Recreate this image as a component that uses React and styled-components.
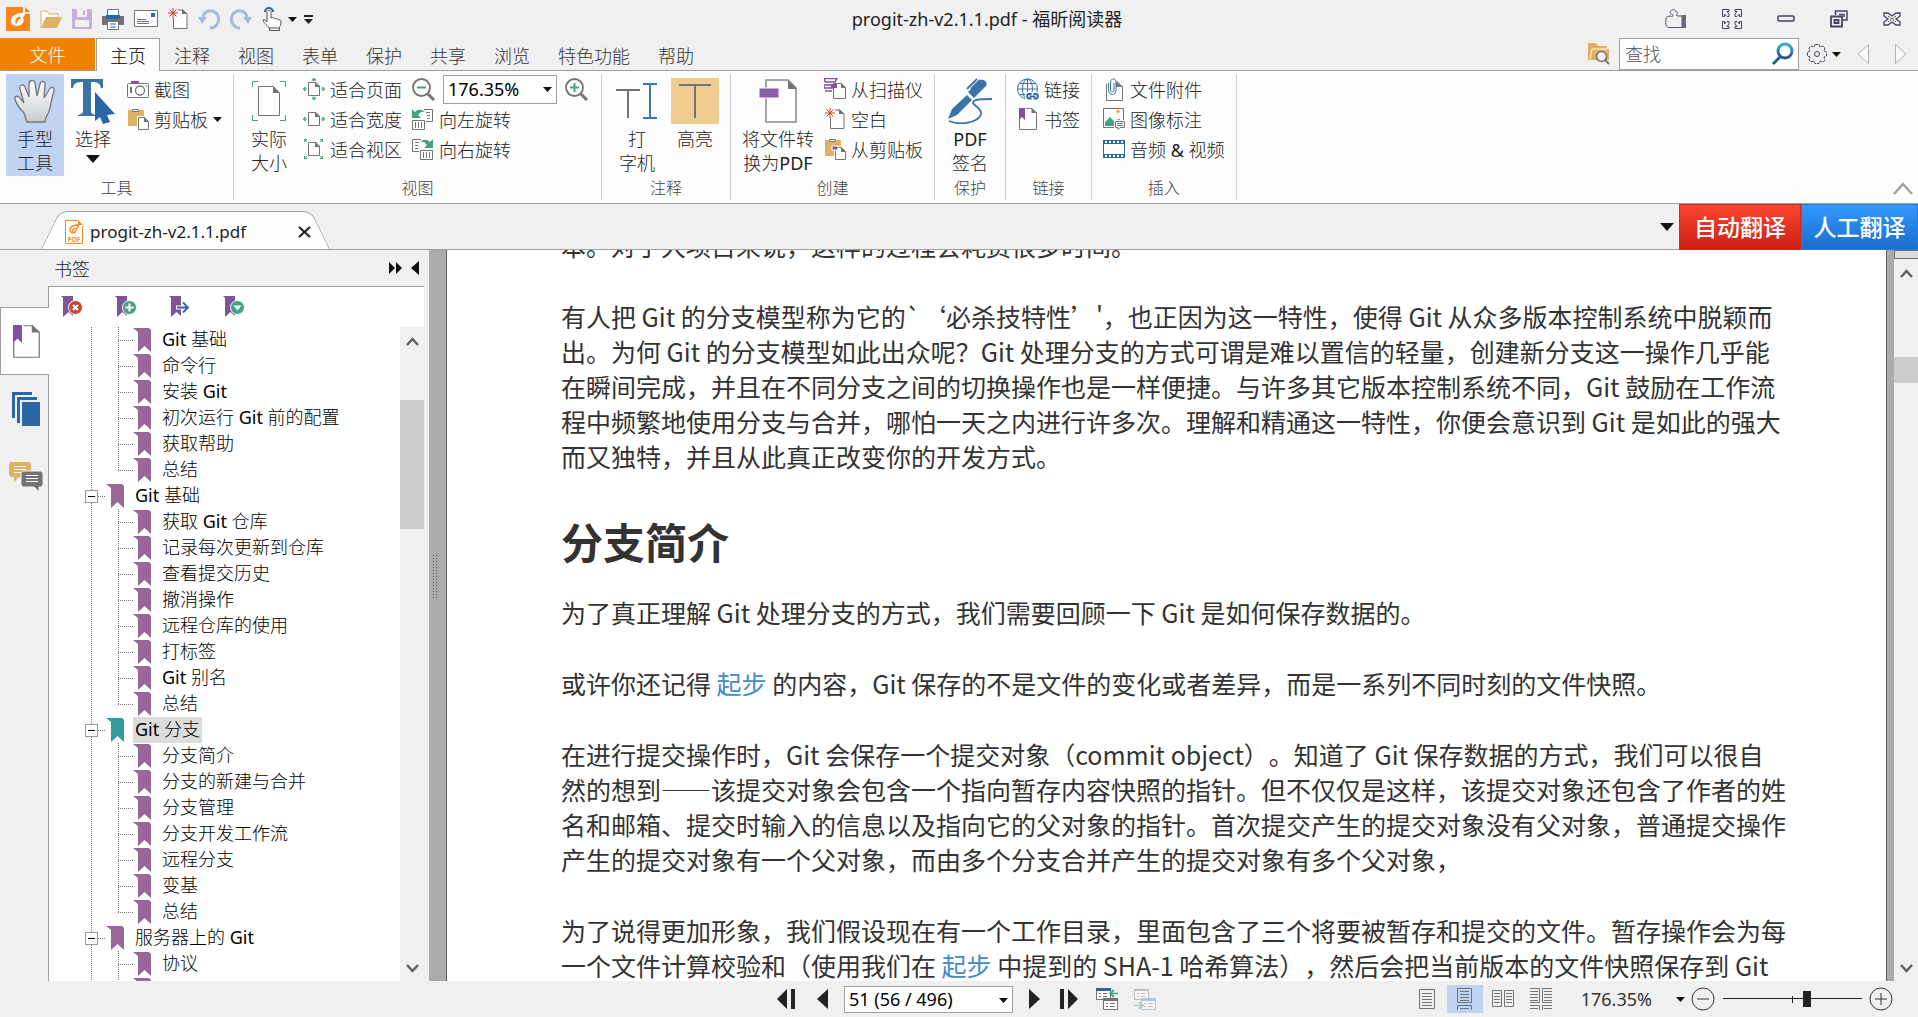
import React from "react"
import styled, { createGlobalStyle, css } from "styled-components"

const GlobalStyle = createGlobalStyle`
  * {
    box-sizing: border-box;
  }
  body {
    margin: 0;
    overflow: hidden;
    background: #f0f0f0;
    color: #222;
    font-family: "Noto Sans", "Noto Sans CJK SC", sans-serif;
    font-size: 18px;
  }
  button, select, input {
    margin: 0;
    padding: 0;
    border: 0;
    border-radius: 0;
    background: none;
    color: inherit;
    font: inherit;
  }
  svg {
    display: block;
    flex: none;
  }
`

const Window = styled.div`
  display: flex;
  flex-direction: column;
  height: 100vh;
`

/* title bar */

const TitleBar = styled.header`
  display: flex;
  align-items: center;
  height: 38px;
  padding: 0 17px 0 6px;
`
const QuickTools = styled.div`
  display: flex;
  align-items: center;
  gap: 10px;
`
const MenuCarets = styled.div`
  display: flex;
  align-items: center;
  gap: 7px;
  margin-left: -4px;
`
const IconButton = styled.button`
  display: flex;
  align-items: center;
  justify-content: center;
`
const Title = styled.h1`
  flex: 1;
  margin: 0;
  padding-right: 4px;
  text-align: center;
  font-size: 18px;
  line-height: 24px;
  font-weight: 400;
`
const WindowButtons = styled.div`
  display: flex;
  align-items: center;
  gap: 35px;
`

/* ribbon tabs */

const TabRow = styled.nav`
  display: flex;
  height: 33px;
  padding-right: 11px;
  border-bottom: 1px solid #a0a0a0;
`
const FileTab = styled.button`
  width: 95px;
  margin-right: 1px;
  background: #f08200;
  color: #fff;
  font-weight: 300;
`
const Tab = styled.button`
  height: 33px;
  padding: 0 13px;
  border: 1px solid transparent;
  border-bottom: 0;
  color: #333;
  font-weight: 300;
  ${props => props.$active && css`
    background: #fdfdfd;
    border-color: #a0a0a0;
    color: #000;
  `}
`
const SearchArea = styled.div`
  display: flex;
  align-items: center;
  margin-left: auto;
`
const SearchBox = styled.label`
  display: flex;
  align-items: center;
  width: 180px;
  height: 32px;
  margin: 0 8px 0 9px;
  padding: 0 4px 0 5px;
  border: 1px solid #a0a0a0;
  background: #fff;
`
const SearchInput = styled.input`
  flex: 1;
  min-width: 0;
  outline: 0;
  font-weight: 300;
  &::placeholder {
    color: #555;
    opacity: 1;
  }
`
const SearchNav = styled.div`
  display: flex;
  gap: 26px;
  margin-left: 16px;
`

/* ribbon */

const Ribbon = styled.section`
  display: flex;
  height: 133px;
  padding-top: 3px;
  border-bottom: 1px solid #a0a0a0;
  background: #fdfdfd;
`
const Group = styled.div`
  display: flex;
  flex-direction: column;
  margin-bottom: 3px;
  padding: 0 6px;
  border-right: 1px solid #d0d0d0;
`
const GroupBody = styled.div`
  display: flex;
  flex: none;
  height: 102px;
`
const GroupLabel = styled.div`
  line-height: 24px;
  text-align: center;
  font-size: 16px;
  font-weight: 300;
  color: #444;
`
const BigButton = styled.button`
  display: flex;
  flex-direction: column;
  align-items: center;
  width: ${props => (props.$wide ? "82px" : "58px")};
  padding-top: 4px;
  line-height: 24px;
  font-weight: 300;
  white-space: nowrap;
  background: ${props => (props.$active ? "#c1d3f2" : "none")};
`
const BigIcon = styled.span`
  display: flex;
  align-items: center;
  justify-content: center;
  width: 48px;
  height: 46px;
  margin-bottom: 3px;
  background: ${props => (props.$lit ? "#f0cb92" : "none")};
`
const DropArrow = styled.span`
  display: flex;
  align-items: center;
  height: 16px;
`
const Latin = styled.span`
  font-weight: 400;
`
const Column = styled.div`
  display: flex;
  flex-direction: column;
  padding: 0 5px;
`
const SmallButton = styled.button`
  display: flex;
  align-items: center;
  gap: 5px;
  height: 30px;
  font-weight: 300;
  white-space: nowrap;
`
const ZoomRow = styled.div`
  display: flex;
  align-items: center;
  gap: 8px;
  height: 30px;
  padding-right: 2px;
`
const SelectWrap = styled.label`
  position: relative;
  display: flex;
  width: ${props => props.$width};
  height: ${props => props.$height};
  border: 1px solid #a0a0a0;
  background: #fff;
  color: #000;
  svg {
    position: absolute;
    right: 4px;
    top: 11px;
    pointer-events: none;
  }
`
const Select = styled.select`
  flex: 1;
  padding: 0 4px;
  appearance: none;
  outline: 0;
`
const Collapse = styled.button`
  align-self: flex-end;
  margin: 0 5px 8px auto;
`

/* document tabs */

const DocTabs = styled.div`
  display: flex;
  align-items: flex-end;
  height: 46px;
  padding-left: 41px;
  border-bottom: 1px solid #a0a0a0;
`
const DocTab = styled.div`
  position: relative;
  isolation: isolate;
  display: flex;
  align-items: center;
  width: 289px;
  height: 38px;
  padding: 3px 19px 0 24px;
  font-size: 17px;
  &::before,
  &::after {
    content: "";
    position: absolute;
    z-index: -1;
    top: 0;
    bottom: 0;
    background: #fdfdfd;
    border-top: 1px solid #a0a0a0;
  }
  &::before {
    left: 0;
    right: 40%;
    border-left: 1px solid #a0a0a0;
    border-top-left-radius: 8px;
    transform: skewX(-26deg);
    transform-origin: bottom left;
  }
  &::after {
    left: 40%;
    right: 0;
    border-right: 1px solid #a0a0a0;
    border-top-right-radius: 8px;
    transform: skewX(26deg);
    transform-origin: bottom right;
  }
`
const DocName = styled.span`
  flex: 1;
  margin-left: 7px;
`
const TabActions = styled.div`
  display: flex;
  align-self: stretch;
  margin: 0 0 -1px auto;
`
const Translate = styled.button`
  width: ${props => (props.$blue ? "117px" : "122px")};
  height: 46px;
  margin-left: ${props => (props.$blue ? "0" : "5px")};
  padding-bottom: 2px;
  background: ${props =>
    props.$blue
      ? "linear-gradient(#3398ff, #1a6dcc)"
      : "linear-gradient(#fb4630, #cc1f14)"};
  border: 1px solid ${props => (props.$blue ? "#1f7ce0" : "#d8251a")};
  color: #fff;
  font-size: 23px;
  font-weight: 500;
`

/* side panel */

const Main = styled.main`
  display: flex;
  flex: 1;
  min-height: 0;
`
const Strip = styled.div`
  display: flex;
  flex-direction: column;
  width: 48px;
  padding-top: 57px;
`
const StripButton = styled.button`
  position: relative;
  z-index: 1;
  display: flex;
  align-items: center;
  justify-content: center;
  width: 49px;
  height: 68px;
  padding-left: 2px;
  border: 1px solid transparent;
  border-right: 0;
  ${props => props.$active && css`
    background: #fff;
    border-color: #a0a0a0;
  `}
`
const Panel = styled.aside`
  display: flex;
  flex-direction: column;
  width: 376px;
`
const PanelHeader = styled.div`
  display: flex;
  align-items: center;
  gap: 9px;
  height: 36px;
  padding: 0 5px 0 6px;
  h2 {
    flex: 1;
    margin: 0;
    font-size: 18px;
    font-weight: 300;
  }
`
const PanelBody = styled.div`
  display: flex;
  flex-direction: column;
  flex: 1;
  min-height: 0;
  border: 1px solid #a0a0a0;
  border-width: 1px 0 0 1px;
  background: #fff;
`
const BookmarkTools = styled.div`
  display: flex;
  gap: 32px;
  height: 40px;
  padding: 7px 12px;
`
const TreeArea = styled.div`
  display: flex;
  flex: 1;
  min-height: 0;
`
const Tree = styled.ul`
  flex: 1;
  min-width: 0;
  margin: 0;
  padding: 0 0 0 36px;
  overflow: hidden;
  list-style: none;
`
const TreeRow = styled.li`
  display: flex;
  align-items: center;
  height: 26px;
`
const dots = "repeating-linear-gradient(to bottom, #777 0 1px, transparent 1px 2px)"
const rowDots = "repeating-linear-gradient(to right, #777 0 1px, transparent 1px 2px)"

const Guide = styled.span`
  display: flex;
  align-items: center;
  width: 13px;
  height: 26px;
  background: ${dots} 6px 0 / 1px 100% no-repeat;
`
const Branch = styled.span`
  width: 15px;
  height: 26px;
  margin-left: 20px;
  background:
    ${dots} 0 0 / 1px ${props => (props.$last ? "50%" : "100%")} no-repeat,
    ${rowDots} 0 13px / 100% 1px no-repeat;
`
const Stub = styled.span`
  width: 8px;
  height: 1px;
  background: ${rowDots};
`
const Toggle = styled.button`
  display: flex;
  align-items: center;
  justify-content: center;
  width: 13px;
  height: 13px;
  border: 1px solid #999;
  background: #fff;
  &::before {
    content: "";
    width: 7px;
    height: 1px;
    background: #000;
  }
`
const TreeLink = styled.a`
  height: 26px;
  margin-left: 7px;
  padding: 0 2px;
  line-height: 25px;
  color: #000;
  font-weight: 300;
  text-decoration: none;
  white-space: nowrap;
  background: ${props => (props.$selected ? "#dcdcdc" : "none")};
`
const ScrollBar = styled.div`
  display: flex;
  flex-direction: column;
  align-items: center;
  width: 24px;
  padding-bottom: 8px;
  background: #f0f0f0;
`
const SplitBox = styled.div`
  width: 24px;
  height: 9px;
  border: 1px solid #707070;
  border-right: 0;
  background: #dcdcdc;
`
const ScrollThumb = styled.div`
  width: 24px;
  height: ${props => props.$height};
  margin: ${props => props.$top} 0 auto;
  background: #cdcdcd;
`
const ScrollButton = styled.button`
  margin-top: ${props => props.$top || "0"};
`
const Splitter = styled.div`
  display: flex;
  align-items: center;
  width: 22px;
  padding-left: 4px;
  border-left: 5px solid #f0f0f0;
  background: #ababab;
`
const Grip = styled.span`
  width: 4px;
  height: 43px;
  margin-bottom: 78px;
  background: conic-gradient(from 270deg at 1px 1px, #606060 90deg, transparent 0) 0 0 / 3px 3px;
`

/* page */

const Viewport = styled.div`
  display: flex;
  flex: 1;
  min-width: 0;
  padding-right: 7px;
  background: #ababab;
  overflow: hidden;
`
const Page = styled.article`
  flex: 1;
  padding: 0 0 0 114px;
  border: 1px solid #606060;
  border-width: 0 1px;
  background: #fff;
  color: #333;
  font-family: "Noto Sans CJK SC", sans-serif;
  font-size: 25px;
  line-height: 35px;
  text-spacing-trim: space-all;
  white-space: nowrap;
  overflow: hidden;
  p {
    margin: 0 0 36px;
  }
  p:first-child {
    margin-top: -22px;
  }
  h2 {
    margin: 0 0 24px;
    font-size: 42px;
    line-height: 61px;
    font-weight: 700;
  }
  a {
    color: #428bca;
    text-decoration: none;
  }
`

/* status bar */

const StatusBar = styled.footer`
  display: grid;
  grid-template-columns: 1fr auto 1fr;
  align-items: center;
  height: 36px;
  padding: 0 25px 0 40px;
`
const Pager = styled.div`
  grid-column: 2;
  display: flex;
  align-items: center;
  gap: 16px;
`
const ViewTools = styled.div`
  display: flex;
  align-items: center;
  justify-content: flex-end;
`
const ViewButton = styled.button`
  display: flex;
  align-items: center;
  justify-content: center;
  width: 36px;
  height: 28px;
  margin-right: 2px;
  background: ${props => (props.$active ? "#c1d3f2" : "none")};
`
const ZoomText = styled.button`
  display: flex;
  align-items: center;
  gap: 24px;
  margin: 0 6px 0 20px;
  color: #333;
`
const ZoomSlider = styled.input`
  width: 139px;
  height: 22px;
  margin: 0 7px 0 8px;
  appearance: none;
  background:
    linear-gradient(#222, #222) 0 10px / 100% 1px no-repeat,
    linear-gradient(#222, #222) 50% 50% / 1px 7px no-repeat;
  &::-webkit-slider-thumb {
    appearance: none;
    width: 8px;
    height: 16px;
    background: #222;
  }
`

/* icons */

const Icon = ({ w = 22, h = 22, children }) => (
  <svg width={w} height={h} viewBox={`0 0 ${w} ${h}`} fill="none" aria-hidden="true">
    {children}
  </svg>
)

const gray = "#737373"
const green = "#46a17e"
const blue = "#2b67a4"
const purple = "#7d539b"
const sand = "#e1b062"

const Caret = ({ w = 9, h = 5 }) => (
  <Icon w={w} h={h}><path d={`M0 0H${w}L${w / 2} ${h}Z`} fill="#111" /></Icon>
)

const FoxitIcon = () => (
  <Icon w={24} h={24}>
    <path d="M0 0H17V7H24V24H0Z" fill="#f6861f" />
    <path d="M19 0L24 5H19Z" fill="#f6861f" />
    <path d="M19 6C15 5.500 12 6 9 8C5 10 4 14 6 17C8 19.500 13 19.500 16 17C18 15 18 12 17 10C18.500 9 19 8 19 6Z" fill="#fff" />
    <path d="M14 9.500C10 10 8 14 10 17C12 16 10.500 12.500 15 11.500Z" fill="#f6861f" />
  </Icon>
)
const FolderIcon = () => (
  <Icon w={22} h={20}>
    <path d="M1 19V2H7L9 5H18V9" stroke={sand} fill="#fff" />
    <path d="M1 19L6 8H22L17 19Z" fill={sand} />
  </Icon>
)
const SaveIcon = () => (
  <Icon w={20} h={20}>
    <path d="M0 0H20V20H0Z" fill="#c6b2d6" />
    <path d="M5 0H15V8H5ZM3 11H17V18H3Z" fill="#f0f0f0" />
    <path d="M11 1H13V6H11Z" fill="#c6b2d6" />
  </Icon>
)
const PrintIcon = () => (
  <Icon w={22} h={22}>
    <path d="M5.500 1.500H16.500V8H5.500Z" stroke={gray} fill="#fff" />
    <path d="M0 8H22V17H0Z" fill={gray} />
    <path d="M4 7H18V11H4Z" fill={blue} />
    <path d="M5.500 13.500H16.500V21.500H5.500Z" stroke={gray} fill="#fff" />
    <path d="M8 16H14M8 19H14" stroke={blue} />
  </Icon>
)
const MailIcon = () => (
  <Icon w={24} h={18}>
    <path d="M.5.5H23.500V16.500H.5Z" stroke={gray} fill="#fff" />
    <path d="M17 3H21V7H17Z" fill={blue} />
    <path d="M3 9.500H12M3 11.500H15M3 13.500H15" stroke={gray} />
  </Icon>
)
const NewIcon = () => (
  <Icon w={20} h={22}>
    <path d="M5.500 10V20.500H19V6L15 2H10" stroke={gray} fill="#fff" />
    <path d="M14 1V6H19.500Z" fill={gray} />
    <path d="M5 0V10M0 5H10M1.500 1.500L8.500 8.500M8.500 1.500L1.500 8.500" stroke="#c5452f" />
  </Icon>
)
const UndoIcon = ({ flip }) => (
  <Icon w={22} h={22}>
    <g transform={flip ? "matrix(-1 0 0 1 22 0)" : undefined}>
      <path d="M5 9C6 3 14 0 19 6C23 12 19 20 12 20" stroke="#a5bdd4" strokeWidth="3" />
      <path d="M0 9H9L4 16Z" fill="#a5bdd4" />
    </g>
  </Icon>
)
const TouchIcon = () => (
  <Icon w={20} h={24}>
    <path d="M3 5A4 4 0 0 1 11 5" stroke={blue} strokeWidth="2" />
    <path d="M5 15V5C5 3 9 3 9 5V11C11 10 12 11 13 12C15 11 16 12 16 13C18 12 19 13 19 15C19 18 18 19 17 21H7C5 17 1 16 1 13C2 12 4 13 5 15Z" fill="#fff" stroke="#555" />
    <path d="M7.500 21V23.500H17.500V21" stroke="#555" />
  </Icon>
)
const MenuCaretIcon = () => (
  <Icon w={9} h={9}>
    <path d="M0 1H9" stroke="#222" strokeWidth="2" />
    <path d="M0 4H9L4.500 9Z" fill="#222" />
  </Icon>
)

const SkinIcon = () => (
  <Icon w={22} h={20}>
    <path d="M3 18.500H17V7H13L11 6C13 5 13 3 11 3C10 0 7 0 6 2C4 4 6 5 8 6C8 8 7 8 6 7C3 7 0 8 1 11C0 14 1 17 3 18.500Z" stroke="#55556a" />
    <path d="M17 6H21V19H17Z" fill="#666680" />
  </Icon>
)
const FullIcon = () => (
  <Icon w={20} h={20}>
    {[[0, 0, 1, 1], [20, 0, -1, 1], [0, 20, 1, -1], [20, 20, -1, -1]].map(([x, y, a, b]) => (
      <g key={`${x}-${y}`} transform={`matrix(${a} 0 0 ${b} ${x} ${y})`}>
        <path d="M.5 7.500V.5H7V2.500H5L7 5V7.500H5L2.500 5V7.500Z" stroke="#44445c" />
      </g>
    ))}
  </Icon>
)
const MinimizeIcon = () => (
  <Icon w={18} h={8}><rect x="1" y="1" width="16" height="5" rx="1" stroke="#44445c" strokeWidth="1.500" /></Icon>
)
const RestoreIcon = () => (
  <Icon w={18} h={18}>
    <path d="M5.500 5V1H17V10H13" stroke="#44445c" strokeWidth="1.500" />
    <path d="M9 4.500H14V7" stroke="#44445c" strokeWidth="1.500" />
    <path d="M1 6.500H12V16.500H1ZM4.500 10H8.500V13H4.500Z" stroke="#44445c" strokeWidth="1.800" />
  </Icon>
)
const CloseIcon = () => (
  <Icon w={18} h={14}>
    <path d="M1 1H5L9 4L13 1H17V4L13 7L17 10V13H13L9 10L5 13H1V10L5 7L1 4Z" stroke="#44445c" strokeWidth="1.300" />
    <path d="M5 4L13 10M13 4L5 10" stroke="#44445c" strokeDasharray="2 1" />
  </Icon>
)
const FolderSearchIcon = () => (
  <Icon w={22} h={22}>
    <path d="M0 0H8L10 3H19V6H21V17H0Z" fill={sand} />
    <path d="M2 16L4 6H19" stroke="#fff" />
    <circle cx="13.500" cy="13.500" r="5" fill="#f0f0f0" stroke={gray} strokeWidth="1.600" />
    <path d="M17 17L21 21" stroke={gray} strokeWidth="2" />
  </Icon>
)
const SearchIcon = () => (
  <Icon w={22} h={24}>
    <defs>
      <linearGradient id="lens" x1="0" y1="0" x2="0" y2="1">
        <stop offset="0" stopColor="#3fb0d2" />
        <stop offset="1" stopColor="#2c4e90" />
      </linearGradient>
    </defs>
    <circle cx="13" cy="9" r="7" stroke="url(#lens)" strokeWidth="3" />
    <path d="M8 15L1 22" stroke="#2f5796" strokeWidth="3" />
  </Icon>
)
const GearIcon = () => (
  <Icon w={20} h={20}>
    <path d="M8 .5H12L13 3L16 2L18 4L17 7L19.500 8V12L17 13L18 16L16 18L13 17L12 19.500H8L7 17L4 18L2 16L3 13L.5 12V8L3 7L2 4L4 2L7 3Z" stroke="#44445c" strokeDasharray="3 1" />
    <circle cx="10" cy="10" r="2.500" stroke="#44445c" />
  </Icon>
)
const TriIcon = ({ right }) => (
  <Icon w={12} h={20}><path d={right ? "M.5.5V19.500L11 10Z" : "M11.500.5V19.500L1 10Z"} stroke="#b0b0b8" fill="#fafafa" /></Icon>
)

const HandIcon = () => (
  <Icon w={42} h={44}>
    <defs>
      <linearGradient id="palm" x1="0" y1="0" x2="0" y2="1">
        <stop offset="0" stopColor="#fff" />
        <stop offset="1" stopColor="#c9cdd2" />
      </linearGradient>
    </defs>
    <path d="M13 43L10 34C6 30 2 24 1 20C0 17 4 16 6 19L10 24L6 10C5 6 9 4 11 8L15 18L15 5C15 1 20 0 21 4L23 17L26 5C27 1 32 2 31 6L30 19L35 11C37 7 41 8 40 12C38 18 37 24 36 29C35 35 31 38 31 43Z" fill="url(#palm)" stroke="#777" strokeWidth="1.300" />
  </Icon>
)
const SelectTextIcon = () => (
  <Icon w={46} h={46}>
    <path d="M1 1H33V10H31C30 5 28 4 21 4V33C21 36 23 36 26 37V38H8V37C11 36 13 36 13 33V4C6 4 4 5 3 10H1Z" fill="#3a72aa" />
    <path d="M25 14L45 36L37 37L40 44L33 46L30 39L25 43Z" fill="#2a66a3" />
  </Icon>
)
const CameraIcon = () => (
  <Icon w={22} h={18}>
    <path d="M4 1H12V4H4Z" fill={purple} />
    <rect x=".5" y="3.500" width="21" height="14" rx="1" stroke={gray} fill="#fff" />
    <circle cx="13" cy="10.500" r="4.500" stroke={gray} strokeWidth="1.300" />
    <path d="M4 7V13" stroke={gray} strokeWidth="2" />
    <path d="M18 6H20" stroke={gray} />
  </Icon>
)
const ClipboardIcon = ({ mark }) => (
  <Icon w={22} h={22}>
    <path d="M1 2H17V18H1Z" fill={sand} />
    <path d="M5.500 3.500V1.500H11.500V3.500Z" fill="#fff" stroke={gray} />
    <path d="M10 8H22V22H10Z" fill="#fdfdfd" />
    <path d="M11.500 9.500H17.500L21.500 13.500V21.500H11.500Z" fill="#fff" stroke={gray} />
    <path d="M17 9V14H22Z" fill={gray} />
    {mark && <path d="M8 8H14V12H8Z" fill={purple} stroke="#fff" />}
  </Icon>
)
const ActualIcon = () => (
  <Icon w={34} h={40}>
    <path d="M.5 6V.5H6M28 .5H33.500V6M33.500 34V39.500H28M6 39.500H.5V34" stroke={green} />
    <path d="M6.500 5.500H21L27.500 12V34.500H6.500Z" stroke={gray} fill="#fff" />
    <path d="M21 5V12H28Z" fill={gray} />
  </Icon>
)
const FitIcon = ({ mode }) => (
  <Icon w={22} h={22}>
    <path d="M5.500 4.500H13L16.500 8V17.500H5.500Z" stroke={gray} fill="#fff" />
    <path d="M12 4V9H17Z" fill={gray} />
    {mode !== "area" && <path d="M4 11H0M2.500 9L.5 11L2.500 13M18 11H22M19.500 9L21.500 11L19.500 13" stroke={green} strokeWidth="1.200" />}
    {mode === "page" && <path d="M11 3.500V0M9 2.500L11 .5L13 2.500M11 18.500V22M9 19.500L11 21.500L13 19.500" stroke={green} strokeWidth="1.200" />}
    {mode === "area" && <path d="M1.500 4V1.500H4M1.500 1.500L4 4M17 1.500H19.500V4M19.500 1.500L17 4M19.500 18V20.500H17M19.500 20.500L17 18M4 20.500H1.500V18M1.500 20.500L4 18" stroke={green} />}
  </Icon>
)
const ZoomIcon = ({ plus }) => (
  <Icon w={23} h={23}>
    <circle cx="9.500" cy="9.500" r="8.500" stroke={gray} strokeWidth="1.800" />
    <path d="M16 16L22 22" stroke={gray} strokeWidth="3" />
    <path d={plus ? "M5 9.500H14M9.500 5V14" : "M5 9.500H14"} stroke={green} strokeWidth="2" />
  </Icon>
)
const RotateIcon = ({ flip }) => (
  <Icon w={22} h={22}>
    <g transform={flip ? "matrix(-1 0 0 1 21 0)" : undefined}>
      <path d="M12 1.500H20.500V13.500H14M14 4.500H18M15 7.500H18M15 10.500H18" stroke={gray} />
      <path d="M0 10V1L3 4C6 1 10 1 13 4C10 3 8 4 6 7L9 10Z" fill={green} />
      <path d="M.5 12.500H12.500V21.500H.5ZM3.500 14V20M6.500 14V20M9.500 14V20" stroke={gray} fill="#fff" />
    </g>
  </Icon>
)
const TypewriterIcon = () => (
  <Icon w={42} h={38}>
    <path d="M0 8H24M12 8V36" stroke={gray} strokeWidth="2" />
    <path d="M27 2H41M27 36H41M34 2V36" stroke="#3a78b4" strokeWidth="2" />
  </Icon>
)
const HighlightIcon = () => (
  <Icon w={32} h={34}><path d="M0 1H32M16 1V34" stroke={gray} strokeWidth="2" /></Icon>
)
const ConvertIcon = () => (
  <Icon w={38} h={44}>
    <path d="M7 1H29L37 9V43H7Z" fill="#fff" stroke="#888" strokeWidth="1.500" />
    <path d="M29 1V10H38Z" fill={gray} />
    <path d="M0 9H20V19H0Z" fill="#8a5ea8" stroke="#fff" />
  </Icon>
)
const ScannerIcon = () => (
  <Icon w={22} h={22}>
    <path d="M.5 3V.5H13L11 4H2ZM0 7H14V10H0ZM1 13H8" stroke={purple} strokeWidth="1.500" />
    <path d="M9.500 5.500H17.500L21.500 9.500V20.500H9.500Z" fill="#fff" stroke={gray} />
    <path d="M17 5V10H22Z" fill={gray} />
    <path d="M7 6H13V10H7Z" fill={purple} />
  </Icon>
)
const SignIcon = () => (
  <Icon w={46} h={46}>
    <path d="M20 11L30 1M24 11L33 2" stroke="#3a72aa" strokeWidth="1.800" />
    <path d="M33 2C37 1 41 4 39 8L27 20L21 14Z" fill="#3a72aa" />
    <path d="M20 17L25 22L10 37L1 41L5 31Z" fill="#3a72aa" />
    <path d="M45 21C36 21 25 21 26 25C28 29 35 30 34 36C32 44 15 48 2 43" stroke="#3a72aa" strokeWidth="1.800" />
  </Icon>
)
const GlobeIcon = () => (
  <Icon w={22} h={22}>
    <circle cx="10.500" cy="11" r="10" stroke="#3a72aa" />
    <ellipse cx="10.500" cy="11" rx="5" ry="10" stroke="#3a72aa" />
    <path d="M10.500 1V21M1 11H20M3 5.500H18M3 16.500H18" stroke="#3a72aa" />
    <path d="M8 14H22V22H8Z" fill="#fdfdfd" />
    <path d="M14.500 20.500H12C9.500 20.500 9.500 16 12 16H14.500M16.500 16H19C21.500 16 21.500 20.500 19 20.500H16.500M12.500 18.300H18.500" stroke={blue} strokeWidth="1.800" />
  </Icon>
)
const MarkPageIcon = ({ w = 18, h = 22 }) => (
  <svg width={w} height={h} viewBox="0 0 18 22" fill="none" aria-hidden="true">
    <path d="M.5 11V21.500H17.500V5L13 .5H7" stroke={gray} strokeWidth={h > 22 ? 0.8 : 1} fill="#fff" />
    <path d="M12.500 0V5H18Z" fill={gray} />
    <path d="M0 0H6V12L3 9L0 12Z" fill={purple} />
  </svg>
)
const AttachIcon = () => (
  <Icon w={22} h={23}>
    <path d="M3.500 6V22.500H19.500V9L14 3.500" stroke={gray} fill="#fff" />
    <path d="M13 3V9H20Z" fill={gray} />
    <path d="M5.500 5V12C5.500 18 13 18 13 12V4C13 0 7.500 0 7.500 4V12C7.500 15 11 15 11 12V5" stroke="#3a72aa" fill="#fdfdfd" />
  </Icon>
)
const ImageIcon = () => (
  <Icon w={22} h={22}>
    <path d="M.5.5H20.500V19.500H.5Z" stroke={gray} fill="#fff" />
    <path d="M2 18V14L7 9L12 14V12L17 11V18Z" fill={green} />
    <path d="M15 1.500V5.500M13 3.500H17" stroke={sand} strokeWidth="1.500" />
    <path d="M11 12H22V22H11Z" fill="#fff" />
    <path d="M12.500 13.500H21.500V19.500H17L15 21.500V19.500H12.500ZM14 15.500H20M14 17.500H20" stroke={gray} />
  </Icon>
)
const FilmIcon = () => (
  <Icon w={22} h={18}>
    <path d="M0 0H22V18H0Z" fill={blue} />
    <path d="M1 4H21V14H1Z" fill="#fff" />
    <path d="M2 2H21M2 16H21" stroke="#fff" strokeWidth="2" strokeDasharray="2 2" />
  </Icon>
)
const ChevronIcon = ({ w = 13, h = 9, down, color = "#606060" }) => (
  <Icon w={w} h={h}>
    <path d={down ? `M1 1L${w / 2} ${h - 2}L${w - 1} 1` : `M1 ${h - 1}L${w / 2} 2L${w - 1} ${h - 1}`} stroke={color} strokeWidth="2.500" />
  </Icon>
)

const PdfIcon = () => (
  <Icon w={18} h={24}>
    <path d="M13 .5H.5V23.500H17.500V6" stroke="#f6861f" fill="#fff" />
    <path d="M13 0L18 5H13Z" fill="#f6861f" />
    <path d="M13 5C8 5 5 7 5 10C5 14 12 14 11 9L13 7ZM10 8C8 9 7 11 8 12" stroke="#f6861f" strokeWidth="1.500" />
    <text x="9" y="21.500" fontSize="7" fontFamily="Noto Sans" fontWeight="600" textAnchor="middle" fill="#f6861f">PDF</text>
  </Icon>
)
const XIcon = () => (
  <Icon w={13} h={12}><path d="M1 1L12 11M12 1L1 11" stroke="#222" strokeWidth="2.200" /></Icon>
)
const PagesIcon = () => (
  <Icon w={28} h={34}>
    <path d="M0 0H20V3H3V26H0ZM5 5H25V8H8V31H5ZM10 10H28V34H10Z" fill={blue} />
  </Icon>
)
const CommentsIcon = () => (
  <Icon w={34} h={30}>
    <path d="M2 0H20L22 2V12L20 15H10L5 20V15H2L0 13V2Z" fill={sand} />
    <path d="M5 4.500H17M5 7.500H17M5 10.500H12" stroke="#fff" />
    <path d="M14 9H32L34 11V23L32 25H30V30L25 25H14L12 23V11Z" fill={gray} stroke="#f0f0f0" />
    <path d="M17 13.500H29M17 16.500H29M17 19.500H29" stroke="#fff" />
  </Icon>
)
const FlagIcon = ({ color = "#996699" }) => (
  <Icon w={20} h={24}>
    <path d="M0 0H16L18 2V24L11.500 18L5 24V4Z" fill={color} />
  </Icon>
)
const ToolFlagIcon = ({ kind }) => (
  <Icon w={22} h={22}>
    <path d="M0 0H12V20L7.500 16L2 21V2Z" fill={purple} />
    {kind !== "go" && <circle cx="14.500" cy="11.500" r="7" fill={kind === "delete" ? "#c54a33" : green} stroke="#fff" />}
    {kind === "delete" && <path d="M12 9L17 14M17 9L12 14" stroke="#fff" strokeWidth="2" />}
    {kind === "add" && <path d="M14.500 7.500V15.500M10.500 11.500H18.500" stroke="#fff" strokeWidth="2" />}
    {kind === "menu" && <path d="M10.500 9.500H18.500L14.500 14.500Z" fill="#fff" />}
    {kind === "go" && (
      <>
        <path d="M7 11.500H19M14 6.500L19 11.500L14 16.500" stroke="#fff" strokeWidth="4" />
        <path d="M8 11.500H19M14 6.500L19 11.500L14 16.500" stroke={blue} strokeWidth="1.800" />
      </>
    )}
  </Icon>
)

const JumpIcon = ({ dim }) => (
  <g opacity={dim ? 0.4 : 1}>
    <path d="M.5 1.500H14.500V11.500H.5Z" stroke={gray} fill="#fff" />
    <path d={dim ? "M0 1H15V3H0Z" : "M0 0H15V3H0Z"} fill={dim ? gray : blue} />
    <path d="M3 5.500H5M7 5.500H11M3 8.500H5M7 8.500H11" stroke={gray} />
    <path d="M7.500 10.500H21.500V21.500H7.500Z" stroke={dim ? "#4d8cd0" : gray} fill="#fff" />
    <path d="M7 10H22V13H7Z" fill={dim ? "#4d8cd0" : gray} />
    <path d="M10 15.500H12M14 15.500H19M10 18.500H12M14 18.500H19" stroke={gray} />
    <path d={dim ? "M0 17.500H9M5 14L9 17.500L5 21" : "M22 5.500H14M18 2L14 5.500L18 9"} stroke={green} strokeWidth="1.700" />
  </g>
)
const lines = (x1, x2, from, count) =>
  Array.from({ length: count }, (_, i) => `M${x1} ${from + i * 3}H${x2}`).join("")

const SinglePageIcon = () => (
  <Icon w={16} h={20}><path d={`M.5.5H15.500V19.500H.5Z${lines(3, 13, 4.5, 5)}`} stroke={gray} /></Icon>
)
const ContinuousIcon = () => (
  <Icon w={16} h={22}><path d={`M.5.5H14.500V14.500H.5ZM.5 22V17.500H14.500V22${lines(3, 12, 3.5, 4)}M3 20.500H12`} stroke={gray} /></Icon>
)
const FacingIcon = () => (
  <Icon w={22} h={18}><path d={`M.5.5H9.500V16.500H.5ZM12.500.5H21.500V16.500H12.500Z${lines(2, 8, 3.5, 4)}${lines(14, 20, 3.5, 4)}`} stroke={gray} /></Icon>
)
const FacingContinuousIcon = () => (
  <Icon w={22} h={22}><path d={`M0 .5H9.500V14.500H0M22 .5H12.500V14.500H22M0 17.500H9.500V22M22 17.500H12.500V22${lines(0, 8, 3.5, 4)}${lines(14, 22, 3.5, 4)}M0 20.500H8M14 20.500H22`} stroke={gray} /></Icon>
)
const RoundIcon = ({ plus }) => (
  <Icon w={24} h={24}>
    <circle cx="12" cy="12" r="11" stroke="#333" />
    <path d={plus ? "M6 12H18M12 6V18" : "M6 12H18"} stroke="#333" />
  </Icon>
)

const tabs = ["主页", "注释", "视图", "表单", "保护", "共享", "浏览", "特色功能", "帮助"]

const bookmarks = [
  { text: "Git 基础", child: true },
  { text: "命令行", child: true },
  { text: "安装 Git", child: true },
  { text: "初次运行 Git 前的配置", child: true },
  { text: "获取帮助", child: true },
  { text: "总结", child: true, last: true },
  { text: "Git 基础" },
  { text: "获取 Git 仓库", child: true },
  { text: "记录每次更新到仓库", child: true },
  { text: "查看提交历史", child: true },
  { text: "撤消操作", child: true },
  { text: "远程仓库的使用", child: true },
  { text: "打标签", child: true },
  { text: "Git 别名", child: true },
  { text: "总结", child: true, last: true },
  { text: "Git 分支", selected: true },
  { text: "分支简介", child: true },
  { text: "分支的新建与合并", child: true },
  { text: "分支管理", child: true },
  { text: "分支开发工作流", child: true },
  { text: "远程分支", child: true },
  { text: "变基", child: true },
  { text: "总结", child: true, last: true },
  { text: "服务器上的 Git" },
  { text: "协议", child: true },
  { text: "", child: true },
]

const withLatin = text =>
  text.split(/(Git)/).map((part, i) => (part === "Git" ? <Latin key={i}>Git</Latin> : part))

const Small = ({ icon, children }) => (
  <SmallButton>{icon}{children}</SmallButton>
)

const App = () => (
  <Window>
    <GlobalStyle />
    <TitleBar>
      <QuickTools>
        <FoxitIcon />
        <IconButton aria-label="打开"><FolderIcon /></IconButton>
        <IconButton aria-label="保存"><SaveIcon /></IconButton>
        <IconButton aria-label="打印"><PrintIcon /></IconButton>
        <IconButton aria-label="邮件"><MailIcon /></IconButton>
        <IconButton aria-label="新建"><NewIcon /></IconButton>
        <IconButton aria-label="撤消"><UndoIcon /></IconButton>
        <IconButton aria-label="重做"><UndoIcon flip /></IconButton>
        <IconButton aria-label="触摸模式"><TouchIcon /></IconButton>
        <MenuCarets>
          <Caret />
          <IconButton aria-label="自定义"><MenuCaretIcon /></IconButton>
        </MenuCarets>
      </QuickTools>
      <Title>progit-zh-v2.1.1.pdf - 福昕阅读器</Title>
      <WindowButtons>
        <IconButton aria-label="皮肤"><SkinIcon /></IconButton>
        <IconButton aria-label="全屏"><FullIcon /></IconButton>
        <IconButton aria-label="最小化"><MinimizeIcon /></IconButton>
        <IconButton aria-label="还原"><RestoreIcon /></IconButton>
        <IconButton aria-label="关闭"><CloseIcon /></IconButton>
      </WindowButtons>
    </TitleBar>

    <TabRow>
      <FileTab>文件</FileTab>
      {tabs.map((tab, i) => (
        <Tab key={tab} $active={i === 0}>{tab}</Tab>
      ))}
      <SearchArea>
        <IconButton aria-label="高级查找"><FolderSearchIcon /></IconButton>
        <SearchBox>
          <SearchInput placeholder="查找" aria-label="查找" />
          <SearchIcon />
        </SearchBox>
        <SmallButton aria-label="设置"><GearIcon /><Caret /></SmallButton>
        <SearchNav>
          <IconButton aria-label="上一个"><TriIcon /></IconButton>
          <IconButton aria-label="下一个"><TriIcon right /></IconButton>
        </SearchNav>
      </SearchArea>
    </TabRow>

    <Ribbon>
      <Group>
        <GroupBody>
          <BigButton $active>
            <BigIcon><HandIcon /></BigIcon>
            手型<br />工具
          </BigButton>
          <BigButton>
            <BigIcon><SelectTextIcon /></BigIcon>
            选择
            <DropArrow><Caret w={14} h={8} /></DropArrow>
          </BigButton>
          <Column>
            <Small icon={<CameraIcon />}>截图</Small>
            <Small icon={<ClipboardIcon />}>剪贴板<Caret /></Small>
          </Column>
        </GroupBody>
        <GroupLabel>工具</GroupLabel>
      </Group>
      <Group>
        <GroupBody>
          <BigButton>
            <BigIcon><ActualIcon /></BigIcon>
            实际<br />大小
          </BigButton>
          <Column>
            <Small icon={<FitIcon mode="page" />}>适合页面</Small>
            <Small icon={<FitIcon mode="width" />}>适合宽度</Small>
            <Small icon={<FitIcon mode="area" />}>适合视区</Small>
          </Column>
          <Column>
            <ZoomRow>
              <IconButton aria-label="缩小"><ZoomIcon /></IconButton>
              <SelectWrap $width="114px" $height="29px">
                <Select aria-label="缩放比例"><option>176.35%</option></Select>
                <Caret />
              </SelectWrap>
              <IconButton aria-label="放大"><ZoomIcon plus /></IconButton>
            </ZoomRow>
            <Small icon={<RotateIcon />}>向左旋转</Small>
            <Small icon={<RotateIcon flip />}>向右旋转</Small>
          </Column>
        </GroupBody>
        <GroupLabel>视图</GroupLabel>
      </Group>
      <Group>
        <GroupBody>
          <BigButton>
            <BigIcon><TypewriterIcon /></BigIcon>
            打<br />字机
          </BigButton>
          <BigButton>
            <BigIcon $lit><HighlightIcon /></BigIcon>
            高亮
          </BigButton>
        </GroupBody>
        <GroupLabel>注释</GroupLabel>
      </Group>
      <Group>
        <GroupBody>
          <BigButton $wide>
            <BigIcon><ConvertIcon /></BigIcon>
            <span>将文件转<br />换为<Latin>PDF</Latin></span>
          </BigButton>
          <Column>
            <Small icon={<ScannerIcon />}>从扫描仪</Small>
            <Small icon={<Icon><g transform="translate(1 0)"><NewIcon /></g></Icon>}>空白</Small>
            <Small icon={<ClipboardIcon mark />}>从剪贴板</Small>
          </Column>
        </GroupBody>
        <GroupLabel>创建</GroupLabel>
      </Group>
      <Group>
        <GroupBody>
          <BigButton>
            <BigIcon><SignIcon /></BigIcon>
            <Latin>PDF</Latin>
            签名
          </BigButton>
        </GroupBody>
        <GroupLabel>保护</GroupLabel>
      </Group>
      <Group>
        <GroupBody>
          <Column>
            <Small icon={<GlobeIcon />}>链接</Small>
            <Small icon={<MarkPageIcon w={22} />}>书签</Small>
          </Column>
        </GroupBody>
        <GroupLabel>链接</GroupLabel>
      </Group>
      <Group>
        <GroupBody>
          <Column>
            <Small icon={<AttachIcon />}>文件附件</Small>
            <Small icon={<ImageIcon />}>图像标注</Small>
            <Small icon={<FilmIcon />}><span>音频 <Latin>&amp;</Latin> 视频</span></Small>
          </Column>
        </GroupBody>
        <GroupLabel>插入</GroupLabel>
      </Group>
      <Collapse aria-label="折叠功能区"><ChevronIcon w={20} h={13} color="#a0a0a0" /></Collapse>
    </Ribbon>

    <DocTabs>
      <DocTab>
        <PdfIcon />
        <DocName>progit-zh-v2.1.1.pdf</DocName>
        <IconButton aria-label="关闭标签"><XIcon /></IconButton>
      </DocTab>
      <TabActions>
        <IconButton aria-label="标签列表"><Caret w={14} h={8} /></IconButton>
        <Translate>自动翻译</Translate>
        <Translate $blue>人工翻译</Translate>
      </TabActions>
    </DocTabs>

    <Main>
      <Strip>
        <StripButton $active aria-label="书签"><MarkPageIcon w={27} h={33} /></StripButton>
        <StripButton aria-label="页面"><PagesIcon /></StripButton>
        <StripButton aria-label="注释"><CommentsIcon /></StripButton>
      </Strip>
      <Panel>
        <PanelHeader>
          <h2>书签</h2>
          <IconButton aria-label="展开">
            <Icon w={13} h={12}><path d="M0 0L6 6L0 12ZM7 0L13 6L7 12Z" fill="#111" /></Icon>
          </IconButton>
          <IconButton aria-label="收起">
            <Icon w={8} h={14}><path d="M8 0V14L0 7Z" fill="#111" /></Icon>
          </IconButton>
        </PanelHeader>
        <PanelBody>
          <BookmarkTools>
            <IconButton aria-label="删除书签"><ToolFlagIcon kind="delete" /></IconButton>
            <IconButton aria-label="添加书签"><ToolFlagIcon kind="add" /></IconButton>
            <IconButton aria-label="定位书签"><ToolFlagIcon kind="go" /></IconButton>
            <IconButton aria-label="书签菜单"><ToolFlagIcon kind="menu" /></IconButton>
          </BookmarkTools>
          <TreeArea>
            <Tree>
              {bookmarks.map((item, i) => (
                <TreeRow key={i}>
                  <Guide>{!item.child && <Toggle aria-label="折叠" />}</Guide>
                  {item.child ? <Branch $last={item.last} /> : <Stub />}
                  <FlagIcon color={item.selected ? "#339999" : undefined} />
                  <TreeLink href="#" $selected={item.selected}>{withLatin(item.text)}</TreeLink>
                </TreeRow>
              ))}
            </Tree>
            <ScrollBar>
              <ScrollButton $top="10px" aria-label="向上滚动"><ChevronIcon /></ScrollButton>
              <ScrollThumb $top="54px" $height="129px" />
              <ScrollButton aria-label="向下滚动"><ChevronIcon down /></ScrollButton>
            </ScrollBar>
          </TreeArea>
        </PanelBody>
      </Panel>
      <Splitter><Grip /></Splitter>
      <Viewport>
        <Page lang="zh-CN">
          <p>本。对于大项目来说，这样的过程会耗费很多时间。</p>
          <p>
            有人把 Git 的分支模型称为它的`‘必杀技特性’'，也正因为这一特性，使得 Git 从众多版本控制系统中脱颖而<br />
            出。为何 Git 的分支模型如此出众呢？Git 处理分支的方式可谓是难以置信的轻量，创建新分支这一操作几乎能<br />
            在瞬间完成，并且在不同分支之间的切换操作也是一样便捷。与许多其它版本控制系统不同，Git 鼓励在工作流<br />
            程中频繁地使用分支与合并，哪怕一天之内进行许多次。理解和精通这一特性，你便会意识到 Git 是如此的强大<br />
            而又独特，并且从此真正改变你的开发方式。
          </p>
          <h2>分支简介</h2>
          <p>为了真正理解 Git 处理分支的方式，我们需要回顾一下 Git 是如何保存数据的。</p>
          <p>或许你还记得 <a href="#">起步</a> 的内容，Git 保存的不是文件的变化或者差异，而是一系列不同时刻的文件快照。</p>
          <p>
            在进行提交操作时，Git 会保存一个提交对象（commit object）。知道了 Git 保存数据的方式，我们可以很自<br />
            然的想到——该提交对象会包含一个指向暂存内容快照的指针。但不仅仅是这样，该提交对象还包含了作者的姓<br />
            名和邮箱、提交时输入的信息以及指向它的父对象的指针。首次提交产生的提交对象没有父对象，普通提交操作<br />
            产生的提交对象有一个父对象，而由多个分支合并产生的提交对象有多个父对象，
          </p>
          <p>
            为了说得更加形象，我们假设现在有一个工作目录，里面包含了三个将要被暂存和提交的文件。暂存操作会为每<br />
            一个文件计算校验和（使用我们在 <a href="#">起步</a> 中提到的 SHA-1 哈希算法），然后会把当前版本的文件快照保存到 Git
          </p>
        </Page>
      </Viewport>
      <ScrollBar>
        <SplitBox />
        <ScrollButton $top="10px" aria-label="向上滚动"><ChevronIcon /></ScrollButton>
        <ScrollThumb $top="79px" $height="26px" />
        <ScrollButton aria-label="向下滚动"><ChevronIcon down /></ScrollButton>
      </ScrollBar>
    </Main>

    <StatusBar>
      <Pager>
        <IconButton aria-label="首页">
          <Icon w={20} h={20}><path d="M10 0V20L0 10ZM14 0H18V20H14Z" fill="#222" /></Icon>
        </IconButton>
        <IconButton aria-label="上一页">
          <Icon w={15} h={20}><path d="M15 0V20L4 10Z" fill="#222" /></Icon>
        </IconButton>
        <SelectWrap $width="169px" $height="27px">
          <Select aria-label="页码"><option>51 (56 / 496)</option></Select>
          <Caret />
        </SelectWrap>
        <IconButton aria-label="下一页">
          <Icon w={15} h={20}><path d="M0 0V20L11 10Z" fill="#222" /></Icon>
        </IconButton>
        <IconButton aria-label="末页">
          <Icon w={20} h={20}><path d="M0 0H4V20H0ZM8 0V20L18 10Z" fill="#222" /></Icon>
        </IconButton>
        <IconButton aria-label="上一视图"><Icon><JumpIcon /></Icon></IconButton>
        <IconButton aria-label="下一视图"><Icon><JumpIcon dim /></Icon></IconButton>
      </Pager>
      <ViewTools>
        <ViewButton aria-label="单页"><SinglePageIcon /></ViewButton>
        <ViewButton $active aria-label="连续"><ContinuousIcon /></ViewButton>
        <ViewButton aria-label="双页"><FacingIcon /></ViewButton>
        <ViewButton aria-label="双页连续"><FacingContinuousIcon /></ViewButton>
        <ZoomText>176.35%<Caret /></ZoomText>
        <IconButton aria-label="缩小"><RoundIcon /></IconButton>
        <ZoomSlider type="range" min="0" max="100" defaultValue="61" aria-label="缩放" />
        <IconButton aria-label="放大"><RoundIcon plus /></IconButton>
      </ViewTools>
    </StatusBar>
  </Window>
)

export default App
